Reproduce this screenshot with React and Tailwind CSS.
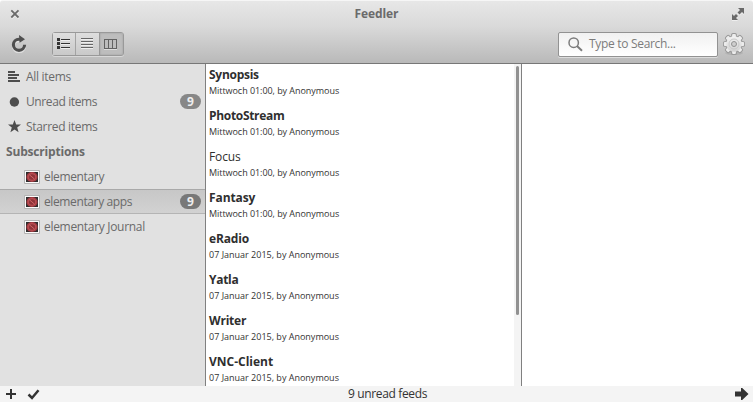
const feeds = [
  ['Synopsis', 'Mittwoch 01:00', true, 'tracking-[-0.28px]'],
  ['PhotoStream', 'Mittwoch 01:00', true, 'tracking-[-0.32px]'],
  ['Focus', 'Mittwoch 01:00', false, 'tracking-[-0.1px]'],
  ['Fantasy', 'Mittwoch 01:00', true, 'tracking-[-0.1px]'],
  ['eRadio', '07 Januar 2015', true, 'tracking-[-0.15px]'],
  ['Yatla', '07 Januar 2015', true, 'tracking-[-0.3px]'],
  ['Writer', '07 Januar 2015', true, 'tracking-[-0.2px]'],
  ['VNC-Client', '07 Januar 2015', true, ''],
];

function CloseIcon() {
  return (
    <svg width="10" height="10" viewBox="0 0 10 10" fill="none">
      <path d="M1.5 2.5l7 7M8.5 2.5l-7 7" stroke="#fff" strokeWidth="1.6" opacity=".6" />
      <path d="M1.3 1.3l7.2 7.2M8.5 1.3L1.3 8.5" stroke="#6b6b6b" strokeWidth="1.8" />
    </svg>
  );
}

function ExpandIcon() {
  return (
    <svg width="14" height="14" viewBox="0 0 14 14">
      <path d="M7 1h6v6l-2-2-2.5 2.5-2-2L9 3zM1 7l2 2 2-2 2 2-2 2 2 2H1z" fill="#fff" opacity=".5" transform="translate(0 1)" />
      <path d="M7 1h6v6l-2-2-2.5 2.5-2-2L9 3zM1 7l2 2 2-2 2 2-2 2 2 2H1z" fill="#696969" />
    </svg>
  );
}

function RefreshIcon() {
  return (
    <svg width="18" height="18" viewBox="0 0 18 18" fill="none">
      <path d="M14.6 10.3A5.6 5.6 0 1 1 9 4.7" stroke="#fff" strokeWidth="3" opacity=".45" transform="translate(0 1)" />
      <path d="M14.6 9.8A5.6 5.6 0 1 1 9 4.2H10" stroke="#4f4f4f" strokeWidth="3.1" />
      <path d="M9 0L15 4.3 9.6 7.8z" fill="#4f4f4f" />
    </svg>
  );
}

function ThumbListIcon() {
  return (
    <svg width="14" height="12" viewBox="0 0 14 12" shapeRendering="crispEdges">
      <path d="M4 2h9v1H4zM4 6h9v1H4zM4 10h9v1H4z" fill="#eee" />
      <path d="M0 0h3v3H0zM0 4h3v3H0zM0 8h3v3H0zM4 1h9v1H4zM4 5h9v1H4zM4 9h9v1H4z" fill="#333" />
    </svg>
  );
}

function LinesIcon() {
  return (
    <svg width="12" height="12" viewBox="0 0 12 12" shapeRendering="crispEdges">
      <path d="M0 1h12v1H0zM0 4h12v1H0zM0 7h12v1H0zM0 10h12v1H0z" fill="#eee" />
      <path d="M0 0h12v1H0zM0 3h12v1H0zM0 6h12v1H0zM0 9h12v1H0z" fill="#666" />
    </svg>
  );
}

function ColumnsIcon() {
  return (
    <svg width="13" height="11" viewBox="0 0 13 11" fill="none" shapeRendering="crispEdges">
      <path d="M.5.5h12v9H.5zM4.5.5v9M8.5.5v9" stroke="#626262" />
      <path d="M0 10.5h13" stroke="#ddd" />
    </svg>
  );
}

function GearIcon() {
  const teeth = [0, 45, 90, 135, 180, 225, 270, 315];
  return (
    <svg width="24" height="24" viewBox="0 0 24 24">
      <defs>
        <linearGradient id="gearFill" x2="0" y2="1">
          <stop stopColor="#f3f3f3" />
          <stop offset="1" stopColor="#d2d2d2" />
        </linearGradient>
      </defs>
      <ellipse cx="12" cy="21" rx="9" ry="2" fill="#999" opacity=".35" />
      <g fill="#999">
        {teeth.map((a) => <rect key={a} x="9.2" y="1" width="5.6" height="8" rx="1.6" transform={`rotate(${a} 12 12)`} />)}
        <circle cx="12" cy="12" r="8.7" />
      </g>
      <g fill="#ececec">
        {teeth.map((a) => <rect key={a} x="10.1" y="1.9" width="3.8" height="8" rx="1" transform={`rotate(${a} 12 12)`} />)}
        <circle cx="12" cy="12" r="7.8" fill="url(#gearFill)" />
      </g>
      <circle cx="12" cy="12" r="5" fill="none" stroke="#c8c8c8" />
      <circle cx="12" cy="12" r="2.5" fill="#cfcfcf" stroke="#929292" />
    </svg>
  );
}

function SearchIcon() {
  return (
    <svg width="15" height="15" viewBox="0 0 15 15" fill="none" stroke="#7c7c7c">
      <circle cx="5.7" cy="5.7" r="4.7" strokeWidth="1.5" />
      <path d="M9 9l5 4.8" strokeWidth="1.9" />
    </svg>
  );
}

function AllIcon() {
  return (
    <svg width="12" height="11" viewBox="0 0 12 11" shapeRendering="crispEdges">
      <path d="M0 0h7v2H0zM0 3h11v2H0zM0 6h9v2H0zM0 9h12v2H0z" fill="#4d4d4d" />
    </svg>
  );
}

function DotIcon() {
  return <svg width="12" height="12" viewBox="0 0 12 12"><circle cx="6.4" cy="6" r="4.7" fill="#4d4d4d" /></svg>;
}

function StarIcon() {
  return (
    <svg width="13" height="13" viewBox="0 0 13 13">
      <path d="M6.5 0l1.7 4.4 4.8.2-3.8 3 1.4 4.7-4.1-2.7-4.1 2.7 1.4-4.7L0 4.6l4.8-.2z" fill="#4d4d4d" />
    </svg>
  );
}

function FeedIcon() {
  return (
    <svg width="16" height="14" viewBox="0 0 16 14">
      <path d="M.5.5h15v13H.5z" fill="#fafafa" stroke="#b3b3b3" />
      <path d="M2 2h12v10H2z" fill="#302d2e" />
      <ellipse cx="8" cy="7" rx="5.6" ry="5" fill="#a83b42" />
      <ellipse cx="8" cy="7" rx="3.9" ry="3.4" fill="#8f3439" stroke="#c4565b" strokeWidth=".9" />
      <path d="M5.4 4.8l5.2 4.4" stroke="#cf6467" />
    </svg>
  );
}

function Badge({ dark }) {
  return (
    <span className={`mr-1 flex h-[15px] w-[21px] items-center justify-center rounded-full text-xs font-bold text-[#eee] ${dark ? 'bg-[#787878]' : 'bg-[#878787]'}`}>9</span>
  );
}

function NavRow({ icon, label, badge, tracking }) {
  return (
    <div className="flex h-[25px] items-center pl-2">
      <span className="flex w-[18px] items-center">{icon}</span>
      <span className={`flex-1 ${tracking}`}>{label}</span>
      {badge && <Badge />}
    </div>
  );
}

function FeedRow({ label, selected, tracking }) {
  return (
    <div className={`flex h-[25px] items-center border-y pl-6 ${selected ? 'border-t-[#a9a9a9] border-b-[#b4b4b4] bg-linear-to-b from-[#c7c7c7] to-[#d2d2d2]' : 'border-transparent'}`}>
      <span className="mr-1"><FeedIcon /></span>
      <span className={`flex-1 ${tracking}`}>{label}</span>
      {selected && <Badge dark />}
    </div>
  );
}

export default function App() {
  return (
    <div className="flex h-[402px] w-[753px] flex-col overflow-hidden whitespace-nowrap bg-white font-['Open_Sans','Noto_Sans',sans-serif] text-xs text-[#6a6a6a]">
      <header className="flex h-16 shrink-0 flex-col rounded-t-[3px] border-t border-b border-t-[#f6f6f6] border-b-[#777] bg-linear-to-b from-[#e7e7e7] via-[#dadada] via-40% to-[#b9b9b9]">
        <div className="flex h-[25px] items-center justify-between pl-2.5 pr-2">
          <span className="w-3"><CloseIcon /></span>
          <h1 className="font-bold tracking-[-0.1px] text-[#6b6b6b]">Feedler</h1>
          <ExpandIcon />
        </div>
        <div className="flex h-9 items-center pl-2.5 pr-[7px]">
          <RefreshIcon />
          <div className="ml-6 flex h-6 w-[72px] rounded-[3px] border border-[#999] shadow-[0_1px_0_#d8d8d8]">
            <span className="flex w-[23px] items-center justify-center border-r border-[#a3a3a3] bg-linear-to-b from-[#dedede] to-[#c9c9c9]"><ThumbListIcon /></span>
            <span className="flex w-[23px] items-center bg-linear-to-b from-[#dedede] to-[#c9c9c9] pl-[5px]"><LinesIcon /></span>
            <span className="flex flex-1 items-center rounded-r-xs border-l border-[#999] bg-[#bdbdbd] pl-1 shadow-[inset_0_0_2px_#999]"><ColumnsIcon /></span>
          </div>
          <div className="ml-auto mr-1 flex h-[25px] w-40 items-center rounded-xs border border-[#929292] bg-linear-to-b from-[#f1f1f1] to-white pl-[9px] shadow-[0_1px_0_#ddd]">
            <SearchIcon />
            <span className="ml-1.5 tracking-[-0.31px] text-[#7c7c7c]">Type to Search...</span>
          </div>
          <GearIcon />
        </div>
      </header>
      <main className="flex min-h-0 flex-1">
        <aside className="w-[206px] shrink-0 border-r border-[#808080] bg-[#e1e1e1]">
          <NavRow icon={<AllIcon />} label="All items" tracking="tracking-[-0.31px]" />
          <NavRow icon={<DotIcon />} label="Unread items" badge tracking="tracking-[-0.38px]" />
          <NavRow icon={<StarIcon />} label="Starred items" tracking="tracking-[-0.31px]" />
          <div className="flex h-[25px] items-center pl-1.5 font-bold tracking-[-0.18px]">Subscriptions</div>
          <FeedRow label="elementary" tracking="tracking-[-0.35px]" />
          <FeedRow label="elementary apps" selected tracking="tracking-[-0.38px]" />
          <FeedRow label="elementary Journal" tracking="tracking-[-0.31px]" />
        </aside>
        <section className="flex w-[316px] shrink-0 overflow-hidden border-r border-[#808080]">
          <ul className="flex-1 pl-[3px] pt-0.5">
            {feeds.map(([title, date, unread, tracking]) => (
              <li key={title} className="h-[41px] text-[#2f2f2f]">
                <div className={`h-[17px] leading-[17px] ${unread ? 'font-bold' : ''} ${tracking}`}>{title}</div>
                <div className={`h-4 text-[9px] leading-4 text-[#333] ${date.startsWith('M') ? 'tracking-[-0.05px]' : ''}`}>{date}, by Anonymous</div>
              </li>
            ))}
          </ul>
          <div className="w-[7px] bg-[#f4f4f4] pl-0.5 pt-0.5">
            <div className="h-[249px] w-[3px] rounded-full bg-[#919191]" />
          </div>
        </section>
        <section className="flex-1 bg-white" />
      </main>
      <footer className="flex h-4 shrink-0 items-center justify-between bg-[#f4f4f4] pl-1.5 pr-1 text-[#333]">
        <span className="flex w-[34px] items-center gap-[11px]">
          <svg className="shrink-0" width="10" height="10" viewBox="0 0 10 10" shapeRendering="crispEdges"><path d="M4 0h2v4h4v2H6v4H4V6H0V4h4z" fill="#333" /></svg>
          <svg className="shrink-0" width="13" height="11" viewBox="0 0 13 11" fill="none"><path d="M1.5 5.5L5 9l6.5-7.8" stroke="#333" strokeWidth="2.5" /></svg>
        </span>
        <span className="tracking-[-0.35px]">9 unread feeds</span>
        <svg width="14" height="12" viewBox="0 0 14 12"><path d="M0 3.5h6V0h1.2L13.5 6l-6.3 6H6V8.5H0z" fill="#333" /></svg>
      </footer>
    </div>
  );
}
